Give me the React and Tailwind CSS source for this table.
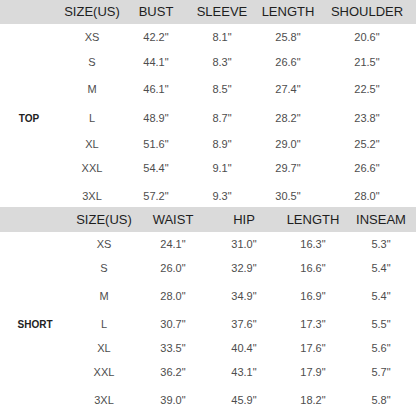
const topHead = ["SIZE(US)", "BUST", "SLEEVE", "LENGTH", "SHOULDER"];
const topRows = [
  ["XS", '42.2"', '8.1"', '25.8"', '20.6"'],
  ["S", '44.1"', '8.3"', '26.6"', '21.5"'],
  ["M", '46.1"', '8.5"', '27.4"', '22.5"'],
  ["L", '48.9"', '8.7"', '28.2"', '23.8"'],
  ["XL", '51.6"', '8.9"', '29.0"', '25.2"'],
  ["XXL", '54.4"', '9.1"', '29.7"', '26.6"'],
  ["3XL", '57.2"', '9.3"', '30.5"', '28.0"'],
];
const topHeights = ["h-[26px]", "h-[24px]", "h-[30px]", "h-[28px]", "h-[24px]", "h-[25px]", "h-[26px] pt-[4px]"];

const shortHead = ["SIZE(US)", "WAIST", "HIP", "LENGTH", "INSEAM"];
const shortRows = [
  ["XS", '24.1"', '31.0"', '16.3"', '5.3"'],
  ["S", '26.0"', '32.9"', '16.6"', '5.4"'],
  ["M", '28.0"', '34.9"', '16.9"', '5.4"'],
  ["L", '30.7"', '37.6"', '17.3"', '5.5"'],
  ["XL", '33.5"', '40.4"', '17.6"', '5.6"'],
  ["XXL", '36.2"', '43.1"', '17.9"', '5.7"'],
  ["3XL", '39.0"', '45.9"', '18.2"', '5.8"'],
];
const shortHeights = ["h-[24px]", "h-[24px]", "h-[32px]", "h-[24px]", "h-[24px]", "h-[24px]", "h-[32px]"];

const Section = ({ label, head, rows, heights, cols, headH, labelPad }) => (
  <div>
    <div className={`grid ${cols} ${headH} items-center bg-[#dadada] text-[13px] text-[#1e1e1e]`}>
      <div />
      {head.map((h) => (
        <div key={h} className="text-center">{h}</div>
      ))}
    </div>
    <div className={`grid ${cols}`}>
      <div className={`row-span-7 flex items-center justify-center ${labelPad} text-[10px] font-bold text-[#222]`}>
        {label}
      </div>
      {rows.map((r, i) =>
        r.map((c, j) => (
          <div
            key={i + "-" + j}
            className={`${heights[i]} flex items-center justify-center text-[11px] text-[#4d4d4d]`}
          >
            {c}
          </div>
        ))
      )}
    </div>
  </div>
);

export default function App() {
  return (
    <div className="w-[416px] h-[416px] overflow-hidden bg-white" style={{ fontFamily: '"Liberation Sans", Arial, sans-serif' }}>
      <Section
        label="TOP"
        head={topHead}
        rows={topRows}
        heights={topHeights}
        cols="grid-cols-[58px_68px_60px_72px_60px_98px]"
        headH="h-[24px]"
        labelPad="pt-[6px]"
      />
      <Section
        label="SHORT"
        head={shortHead}
        rows={shortRows}
        heights={shortHeights}
        cols="grid-cols-[70px_68px_70px_72px_66px_70px]"
        headH="h-[25px]"
        labelPad=""
      />
    </div>
  );
}
